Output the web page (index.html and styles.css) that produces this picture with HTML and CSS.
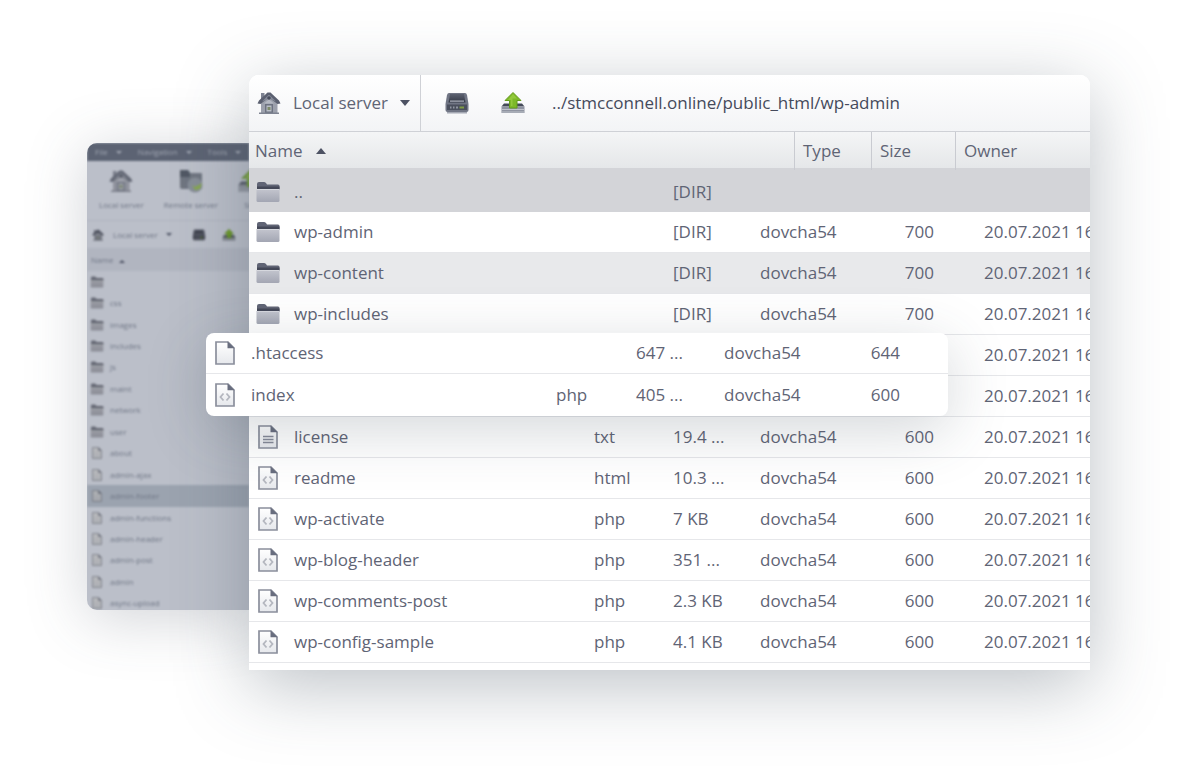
FILE: index.html
```html
<!DOCTYPE html>
<html lang="en">
<head>
    <meta charset="UTF-8">
    <meta name="viewport" content="width=device-width, initial-scale=1.0">
    <title>File manager</title>
    <link rel="stylesheet" href="styles.css">
</head>
<body>
    <!-- icon set -->
    <svg class="sprite" width="0" height="0" aria-hidden="true">
        <defs>
            <linearGradient id="folder-fill" x1="0" y1="0" x2="0" y2="1">
                <stop offset="0" stop-color="#c3c5ce"/>
                <stop offset="1" stop-color="#a3a6b3"/>
            </linearGradient>
            <linearGradient id="page-fill" x1="0" y1="0" x2="0" y2="1">
                <stop offset="0" stop-color="#ffffff"/>
                <stop offset="1" stop-color="#e6e8ec"/>
            </linearGradient>
            <linearGradient id="drive-fill" x1="0" y1="0" x2="0" y2="1">
                <stop offset="0" stop-color="#5c6170"/>
                <stop offset="1" stop-color="#343946"/>
            </linearGradient>
        </defs>
        <symbol id="folder" viewBox="0 0 24 22">
            <path d="M1 8V3q0-2 2-2h5q1 0 2 1l1 1.500h11q1.500 0 1.500 1.500v3z" fill="#606475"/>
            <path d="M1 5.500h22.500V9H1z" fill="#444858"/>
            <path d="M.5 8h23v11.500q0 1.500-1.500 1.500H2q-1.500 0-1.500-1.500z" fill="url(#folder-fill)"/>
            <path d="M.5 8h23v1H.5z" fill="#d6d8de"/>
        </symbol>
        <symbol id="page" viewBox="0 0 20 24">
            <path d="M1 1h12l6 6v16H1z" fill="url(#page-fill)" stroke="#8b8f9c" stroke-width="1.700"/>
            <path d="M12.500.5v6.800H19.700z" fill="#686d7e"/>
        </symbol>
        <symbol id="code" viewBox="0 0 20 24">
            <use href="#page"/>
            <path d="M8.500 10.500L5.500 14l3 3.500M11.500 10.500l3 3.500-3 3.500" fill="none" stroke="#b4b7bf" stroke-width="1.800"/>
        </symbol>
        <symbol id="text" viewBox="0 0 20 24">
            <use href="#page"/>
            <path d="M5 11.500h10.500M5 14.500h10.500M5 17.500h10.500" stroke="#858997" stroke-width="1.400"/>
        </symbol>
        <symbol id="home" viewBox="0 0 24 24">
            <path d="M4 12L12 6l8.500 6v10.500H4z" fill="#9ca0ac"/>
            <path d="M4 2h3.500v6L4 10z" fill="#7e8392"/>
            <path d="M.5 12.500L2 9.500 10.500 1.500h3L22 9.500l1.500 3-3 .500L12 6.500 3.500 13z" fill="#5b6070"/>
            <path d="M5 10.500L11.500 4h1L19 10.500l-7-3z" fill="#858a98"/>
            <path d="M7 12.500l5-4 5 4z" fill="#b4b8c2"/>
            <circle cx="12" cy="7" r="1.800" fill="#474c5b"/>
            <path d="M8 13h8v9H8z" fill="#6d7281"/>
            <path d="M9.500 14.500h5v6h-5z" fill="#b9beC6"/>
            <path d="M10.500 16h3v3h-3z" fill="#7d8a6a"/>
            <path d="M2 21.500h20v1.500H2z" fill="#7e8391"/>
        </symbol>
        <symbol id="drive" viewBox="0 0 24 22">
            <path d="M4 1h16q1.500 0 2 2l1.500 9v6q0 2-2 2h-19q-2 0-2-2v-6L2 3q.5-2 2-2z" fill="#707584"/>
            <path d="M5 2h14l1.500 8.500h-17z" fill="url(#drive-fill)"/>
            <path d="M5 8.500h14v1.200H5z" fill="#a9adb8"/>
            <path d="M2 12.500h20V18H2z" fill="#4a4f5d"/>
            <path d="M5 15.500h1.500M8 15.500h1.500M11 15.500h2" stroke="#8f95a1" stroke-width="2"/>
            <path d="M14.500 15.500h4.500" stroke="#7f9b45" stroke-width="2"/>
            <path d="M2 20h20v1.500H2z" fill="#a4a8b3"/>
        </symbol>
        <symbol id="upload" viewBox="0 0 24 22">
            <path d="M3 11.500h18l2.500 3H.5z" fill="#444a58"/>
            <path d="M.5 14.500h23V21H.5z" fill="#8f94a1"/>
            <path d="M.5 17h23v1H.5zM.5 19.500h23v1H.5z" fill="#c0c3cb"/>
            <path d="M12 .5l8 8h-4V16H8.500V8.500H4z" fill="#7db928" stroke="#649b1c"/>
            <path d="M12 2l4 4.500h-4.500V14H10V8H7z" fill="#93c93c"/>
        </symbol>
        <symbol id="remote" viewBox="0 0 24 24">
            <path d="M1 2q0-1 1-1h7l2 3h11q1 0 1 1v15H3q-2 0-2-2z" fill="#6d7583"/>
            <path d="M1 2q0-1 1-1h7l2 3v4H1z" fill="#414a58"/>
            <circle cx="16" cy="16" r="7.500" fill="#8f98a4"/>
            <path d="M13 16l3 2 7-4-2 6-5 1z" fill="#8fbf3a"/>
        </symbol>
    </svg>

    <main class="stage">
        <section class="back" aria-label="Server overview">
            <div class="back-content">
                <nav class="menu">
                    <span>File</span><i class="down"></i>
                    <span>Navigation</span><i class="down"></i>
                    <span>Tools</span><i class="down"></i>
                </nav>
                <div class="shortcuts">
                    <span class="shortcut"><svg><use href="#home"/></svg>Local server</span>
                    <span class="shortcut"><svg><use href="#remote"/></svg>Remote server</span>
                    <span class="shortcut"><svg><use href="#upload"/></svg>Site</span>
                </div>
                <div class="back-path">
                    <svg><use href="#home"/></svg>
                    <span>Local server</span><i class="down"></i>
                    <svg class="back-drive"><use href="#drive"/></svg>
                    <svg><use href="#upload"/></svg>
                </div>
                <div class="back-head">Name <i class="up"></i></div>
                <ul class="back-list">
                    <li><svg><use href="#folder"/></svg></li>
                    <li><svg><use href="#folder"/></svg>css</li>
                    <li><svg><use href="#folder"/></svg>images</li>
                    <li><svg><use href="#folder"/></svg>includes</li>
                    <li><svg><use href="#folder"/></svg>js</li>
                    <li><svg><use href="#folder"/></svg>maint</li>
                    <li><svg><use href="#folder"/></svg>network</li>
                    <li><svg><use href="#folder"/></svg>user</li>
                    <li><svg><use href="#page"/></svg>about</li>
                    <li><svg><use href="#page"/></svg>admin-ajax</li>
                    <li class="active"><svg><use href="#page"/></svg>admin-footer</li>
                    <li><svg><use href="#page"/></svg>admin-functions</li>
                    <li><svg><use href="#page"/></svg>admin-header</li>
                    <li><svg><use href="#page"/></svg>admin-post</li>
                    <li><svg><use href="#page"/></svg>admin</li>
                    <li><svg><use href="#page"/></svg>async-upload</li>
                </ul>
            </div>
        </section>

        <section class="front" aria-label="Files">
            <div class="window">
                <div class="toolbar">
                    <button class="server" type="button">
                        <svg class="icon"><use href="#home"/></svg>
                        Local server
                        <i class="down"></i>
                    </button>
                    <button class="tool" type="button" aria-label="Drive"><svg class="icon"><use href="#drive"/></svg></button>
                    <button class="tool" type="button" aria-label="Level up"><svg class="icon"><use href="#upload"/></svg></button>
                    <span class="path">../stmcconnell.online/public_html/wp-admin</span>
                </div>
                <table class="files">
                    <thead>
                        <tr><th>Name <i class="up"></i></th><th>Type</th><th>Size</th><th>Owner</th></tr>
                    </thead>
                    <tbody>
                        <tr class="parent"><td><svg class="icon"><use href="#folder"/></svg>..</td><td></td><td>[DIR]</td><td></td><td></td><td></td></tr>
                        <tr><td><svg class="icon"><use href="#folder"/></svg>wp-admin</td><td></td><td>[DIR]</td><td>dovcha54</td><td>700</td><td>20.07.2021 16</td></tr>
                        <tr class="hovered"><td><svg class="icon"><use href="#folder"/></svg>wp-content</td><td></td><td>[DIR]</td><td>dovcha54</td><td>700</td><td>20.07.2021 16</td></tr>
                        <tr><td><svg class="icon"><use href="#folder"/></svg>wp-includes</td><td></td><td>[DIR]</td><td>dovcha54</td><td>700</td><td>20.07.2021 16</td></tr>
                        <!-- these two are lifted out into .picked -->
                        <tr><td></td><td></td><td></td><td></td><td></td><td>20.07.2021 16</td></tr>
                        <tr><td></td><td></td><td></td><td></td><td></td><td>20.07.2021 16</td></tr>
                        <tr><td><svg class="icon"><use href="#text"/></svg>license</td><td>txt</td><td>19.4 ...</td><td>dovcha54</td><td>600</td><td>20.07.2021 16</td></tr>
                        <tr><td><svg class="icon"><use href="#code"/></svg>readme</td><td>html</td><td>10.3 ...</td><td>dovcha54</td><td>600</td><td>20.07.2021 16</td></tr>
                        <tr><td><svg class="icon"><use href="#code"/></svg>wp-activate</td><td>php</td><td>7 KB</td><td>dovcha54</td><td>600</td><td>20.07.2021 16</td></tr>
                        <tr><td><svg class="icon"><use href="#code"/></svg>wp-blog-header</td><td>php</td><td>351 ...</td><td>dovcha54</td><td>600</td><td>20.07.2021 16</td></tr>
                        <tr><td><svg class="icon"><use href="#code"/></svg>wp-comments-post</td><td>php</td><td>2.3 KB</td><td>dovcha54</td><td>600</td><td>20.07.2021 16</td></tr>
                        <tr><td><svg class="icon"><use href="#code"/></svg>wp-config-sample</td><td>php</td><td>4.1 KB</td><td>dovcha54</td><td>600</td><td>20.07.2021 16</td></tr>
                    </tbody>
                </table>
            </div>

            <table class="files picked">
                <tbody>
                    <tr><td><svg class="icon"><use href="#page"/></svg>.htaccess</td><td></td><td>647 ...</td><td>dovcha54</td><td>644</td></tr>
                    <tr><td><svg class="icon"><use href="#code"/></svg>index</td><td>php</td><td>405 ...</td><td>dovcha54</td><td>600</td></tr>
                </tbody>
            </table>
        </section>
    </main>
</body>
</html>
```

FILE: styles.css
```css
* {
    box-sizing: border-box;
}
body {
    margin: 0;
    background-color: #fff;
    color: #5f6475;
    font-family: "Open Sans", "Noto Sans", sans-serif;
    font-size: 17px;
    line-height: 24px;
}
.sprite {
    position: absolute;
}
.stage {
    display: grid;
    grid-template-columns: 162px minmax(0, 1fr);
    padding: 75px 88px 96px 87px;
}
.icon {
    width: 24px;
    height: 24px;
    flex: none;
}
.down,
.up {
    display: inline-block;
    border: 5px solid transparent;
}
.down {
    border-top: 6px solid #4d5263;
    border-bottom: 0;
}
.up {
    border-bottom: 6px solid #4d5263;
    border-top: 0;
}

/* window at the back, out of focus */
.back {
    display: flex;
    margin: 68px 0 60px;
    border-radius: 10px 0 0 10px;
    overflow: hidden;
    background-color: #bbbfc9;
    box-shadow: 0 8px 60px rgba(70, 80, 95, 0.25);
    font-size: 8px;
    line-height: 12px;
    color: #6f7685;
}
.back-content {
    display: flex;
    flex-direction: column;
    width: 100%;
    filter: blur(1px);
    white-space: nowrap;
}
.back .down,
.back .up {
    border-width: 3px;
}
.back .down {
    border-bottom-width: 0;
}
.back .up {
    border-top-width: 0;
}
.menu {
    display: flex;
    align-items: center;
    gap: 8px;
    height: 18px;
    padding-left: 8px;
    background-color: #5c6373;
    color: #a0a6b2;
}
.menu span:nth-of-type(n+2) {
    margin-left: 8px;
}
.menu .down {
    border-top-color: #a0a6b2;
}
.shortcuts {
    display: flex;
    gap: 16px;
    height: 59px;
    padding: 8px 0 0 12px;
}
.shortcut {
    display: flex;
    flex-direction: column;
    align-items: center;
    gap: 6px;
}
.shortcut:nth-child(2) {
    padding: 0 4px;
}
.shortcut svg {
    width: 26px;
    height: 24px;
    filter: brightness(0.85);
    opacity: 0.8;
}
.back-path {
    display: flex;
    align-items: center;
    gap: 8px;
    height: 29px;
    padding-left: 4px;
    border-top: 1px solid #b0b5c0;
    border-bottom: 1px solid #b0b5c0;
}
.back-path svg {
    width: 14px;
    height: 12px;
    filter: brightness(0.8);
}
.back-path .back-drive {
    margin: 0 8px 0 12px;
}
.back-head {
    height: 22px;
    padding: 5px 4px;
    background-color: #b1b5c0;
}
.back-head .up {
    margin-left: 4px;
}
.back-list {
    display: flex;
    flex: 1;
    flex-direction: column;
    margin: 0 0 -4px;
    padding: 0;
    list-style: none;
}
.back-list li {
    display: flex;
    flex: 1;
    align-items: center;
    gap: 6px;
    padding-left: 3px;
}
.back-list svg {
    width: 14px;
    height: 12px;
    filter: brightness(0.72);
    opacity: 0.7;
}
.back-list .active {
    background-color: #9ba3af;
}

/* main window */
.front {
    position: relative;
    box-shadow: 0 16px 72px rgba(60, 72, 88, 0.34);
    border-radius: 10px 10px 0 0;
}
.window {
    overflow: hidden;
    padding-bottom: 8px;
    border-radius: 10px 10px 0 0;
    background-color: #fff;
}
.toolbar {
    display: flex;
    align-items: center;
    height: 57px;
    border-bottom: 1px solid #cfd1d6;
    background: linear-gradient(#fff, #f3f4f6);
}
.server,
.tool {
    display: flex;
    align-items: center;
    border: 0;
    background: none;
    color: inherit;
    font: inherit;
    cursor: pointer;
}
.server {
    gap: 12px;
    height: 100%;
    margin-right: 8px;
    padding: 0 10px 0 8px;
    border-right: 1px solid #cfd1d6;
}
.tool {
    padding: 0 16px;
}
.path {
    margin-left: 11px;
    color: #454a5b;
}
.files {
    display: block;
    width: 100%;
}
.files thead,
.files tbody {
    display: block;
}
.files tr {
    display: grid;
    grid-template-columns: minmax(0, 1fr) 79px 87px 90px 85px 155px;
    align-items: center;
    height: 41px;
    border-bottom: 1px solid #e6e7ea;
}
.files thead tr {
    grid-template-columns: minmax(0, 1fr) 77px 84px 135px;
    height: 36px;
    border: 0;
    background: linear-gradient(#f4f5f6, #e5e7e9);
}
.files th {
    height: 100%;
    padding: 7px 8px;
    border-left: 1px solid #c9cbd1;
    font-weight: 400;
    text-align: left;
}
.files th:first-child {
    padding-left: 6px;
    border-left: 0;
}
.files th .up {
    margin: 0 0 3px 9px;
}
.files td {
    padding: 0;
    white-space: nowrap;
}
.files td:first-child {
    display: flex;
    align-items: center;
    gap: 14px;
    padding-left: 7px;
}
.files td:nth-child(5) {
    padding-right: 1px;
    text-align: right;
}
.files td:nth-child(6) {
    padding-left: 49px;
}
.files .parent {
    height: 44px;
    padding-top: 4px;
    border: 0;
    background-color: #d3d4d8;
}
.files .hovered {
    background-color: #e8e9eb;
}
.window .files {
    margin-bottom: -1px;
}

/* rows lifted above the list */
.picked {
    position: absolute;
    top: 258px;
    left: -43px;
    right: 142px;
    width: auto;
    overflow: hidden;
    border-radius: 8px;
    background-color: #fff;
    box-shadow: 0 14px 60px rgba(60, 72, 88, 0.22);
}
.picked tr {
    grid-template-columns: minmax(0, 1fr) 80px 88px 92px 85px 47px;
}
.picked tr:last-child {
    height: 42px;
    border-bottom: 0;
}
```
